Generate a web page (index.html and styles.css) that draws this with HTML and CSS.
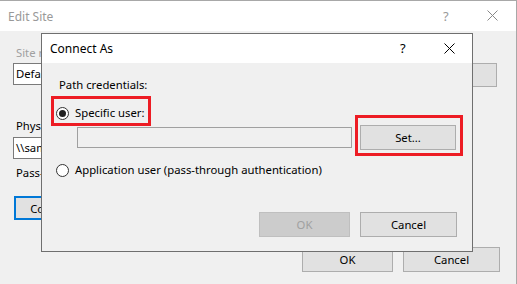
FILE: index.html
```html
<!DOCTYPE html>
<html>
<head>
<meta charset="utf-8">
<link rel="stylesheet" href="styles.css">
</head>
<body>
<div class="screen">
  <div class="outer">
    <div class="titlebar outer-title">
      <span class="title-text">Edit Site</span>
      <span class="tb-help">?</span>
      <svg class="tb-close" width="11" height="11" viewBox="0 0 11 11"><path d="M0.5 0.5 L10.5 10.5 M10.5 0.5 L0.5 10.5" stroke="currentColor" stroke-width="1" fill="none"/></svg>
    </div>
    <div class="outer-body">
      <div class="label disabled">Site name:</div>
      <div class="row-site">
        <div class="textbox site-box">Default Web Site</div>
        <div class="btn select-btn">Select...</div>
      </div>
      <div class="label phys">Physical path:</div>
      <div class="textbox phys-box">\\sample\share</div>
      <div class="label pass">Pass-through authentication</div>
      <div class="btn connect-btn">Connect as...</div>
      <div class="outer-actions">
        <div class="btn act">OK</div>
        <div class="btn act cancel">Cancel</div>
      </div>
    </div>
  </div>

  <div class="dialog">
    <div class="titlebar dlg-title">
      <span class="title-text">Connect As</span>
      <span class="tb-help">?</span>
      <svg class="tb-close" width="11" height="11" viewBox="0 0 11 11"><path d="M0.5 0.5 L10.5 10.5 M10.5 0.5 L0.5 10.5" stroke="currentColor" stroke-width="1" fill="none"/></svg>
    </div>
    <div class="dlg-body">
      <div class="label cred">Path credentials:</div>
      <div class="radio-row first">
        <span class="radio checked"></span>
        <span>Specific user:</span>
      </div>
      <div class="user-row">
        <div class="textbox user-box"></div>
        <div class="btn set-btn">Set...</div>
      </div>
      <div class="radio-row second">
        <span class="radio"></span>
        <span>Application user (pass-through authentication)</span>
      </div>
      <div class="dlg-actions">
        <div class="btn act disabled-btn">OK</div>
        <div class="btn act cancel">Cancel</div>
      </div>
    </div>
  </div>

  <div class="highlight hl-radio"></div>
  <div class="highlight hl-set"></div>
</div>
</body>
</html>
```

FILE: styles.css
```css
* { box-sizing: border-box; }
html, body { margin: 0; padding: 0; }
body {
  width: 517px;
  height: 284px;
  overflow: hidden;
  font-family: "Noto Sans", "Open Sans", sans-serif;
  font-size: 11.3px;
  color: #000;
  background: #f0f0f0;
}
.screen {
  position: relative;
  width: 517px;
  height: 284px;
}
.outer {
  width: 517px;
  height: 284px;
  border-top: 1px solid #a8a8a8;
  border-right: 1px solid #a8a8a8;
  background: #f0f0f0;
}
.titlebar {
  display: flex;
  align-items: center;
  background: #fff;
  position: relative;
  font-size: 12px;
}
.outer-title {
  height: 30px;
  padding-left: 8px;
}
.outer-title .title-text { color: #999; }
.outer-title .tb-help { color: #999; position: absolute; left: 443px; top: 6px; font-size: 13px; }
.outer-title .tb-close { color: #888; position: absolute; left: 487px; top: 9px; }

.outer-body {
  padding-left: 13px;
  padding-top: 14px;
}
.label { line-height: 16px; }
.disabled { color: #a0a0a0; }
.outer-body .label { padding-left: 3px; }
.row-site {
  display: flex;
  align-items: flex-start;
  margin-top: 2px;
}
.textbox {
  background: #fff;
  border: 1px solid #7a7a7a;
  line-height: 20px;
  padding-left: 2px;
  white-space: nowrap;
  overflow: hidden;
}
.site-box { width: 320px; height: 22px; }
.btn {
  background: #e1e1e1;
  border: 1px solid #adadad;
  display: flex;
  align-items: center;
  justify-content: center;
}
.select-btn {
  margin-left: 72px;
  width: 92px;
  height: 24px;
}
.phys { margin-top: 31px; }
.phys-box { width: 420px; height: 22px; margin-top: 3px; }
.pass { margin-top: 6px; }
.connect-btn {
  margin-top: 15px;
  margin-left: 1px;
  width: 100px;
  height: 24px;
  border: 2px solid #0078d7;
}
.outer-actions {
  display: flex;
  margin-top: 27px;
  margin-left: 289px;
  gap: 10px;
}
.act { height: 25px; width: 91px; }
.cancel { width: 97px; }

.dialog {
  position: absolute;
  left: 41px;
  top: 33px;
  width: 432px;
  height: 219px;
  border: 1px solid #6f6f6f;
  background: #f0f0f0;
}
.dlg-title {
  height: 29px;
  padding-left: 8px;
}
.dlg-title .tb-help { position: absolute; left: 358px; top: 5px; font-size: 13px; }
.dlg-title .tb-close { position: absolute; left: 402px; top: 9px; color: #000; }
.dlg-body {
  padding-top: 14px;
  padding-left: 17px;
}
.radio-row {
  display: flex;
  align-items: center;
  line-height: 16px;
  gap: 6px;
}
.radio-row.first { margin-top: 12px; margin-left: -3px; }
.radio-row.second { margin-top: 12px; margin-left: -3px; }
.radio {
  width: 13px;
  height: 13px;
  border: 1px solid #333;
  border-radius: 50%;
  background: #fff;
  display: flex;
  align-items: center;
  justify-content: center;
}
.radio.checked::after {
  content: "";
  width: 7px;
  height: 7px;
  border-radius: 50%;
  background: #222;
}
.user-row {
  display: flex;
  align-items: center;
  margin-top: 4px;
  margin-left: 18px;
  gap: 8px;
}
.user-box {
  width: 275px;
  height: 21px;
  background: #f0f0f0;
  border-color: #a0a0a0;
}
.set-btn { width: 96px; height: 25px; }
.dlg-actions {
  display: flex;
  gap: 10px;
  margin-top: 34px;
  margin-left: 200px;
}
.disabled-btn {
  background: #cccccc;
  border-color: #bfbfbf;
  color: #a0a0a0;
}
.highlight {
  position: absolute;
  border: 3px solid #ed1c24;
}
.hl-radio { left: 51px; top: 96px; width: 100px; height: 30px; }
.hl-set { left: 355px; top: 115px; width: 108px; height: 41px; }
```
